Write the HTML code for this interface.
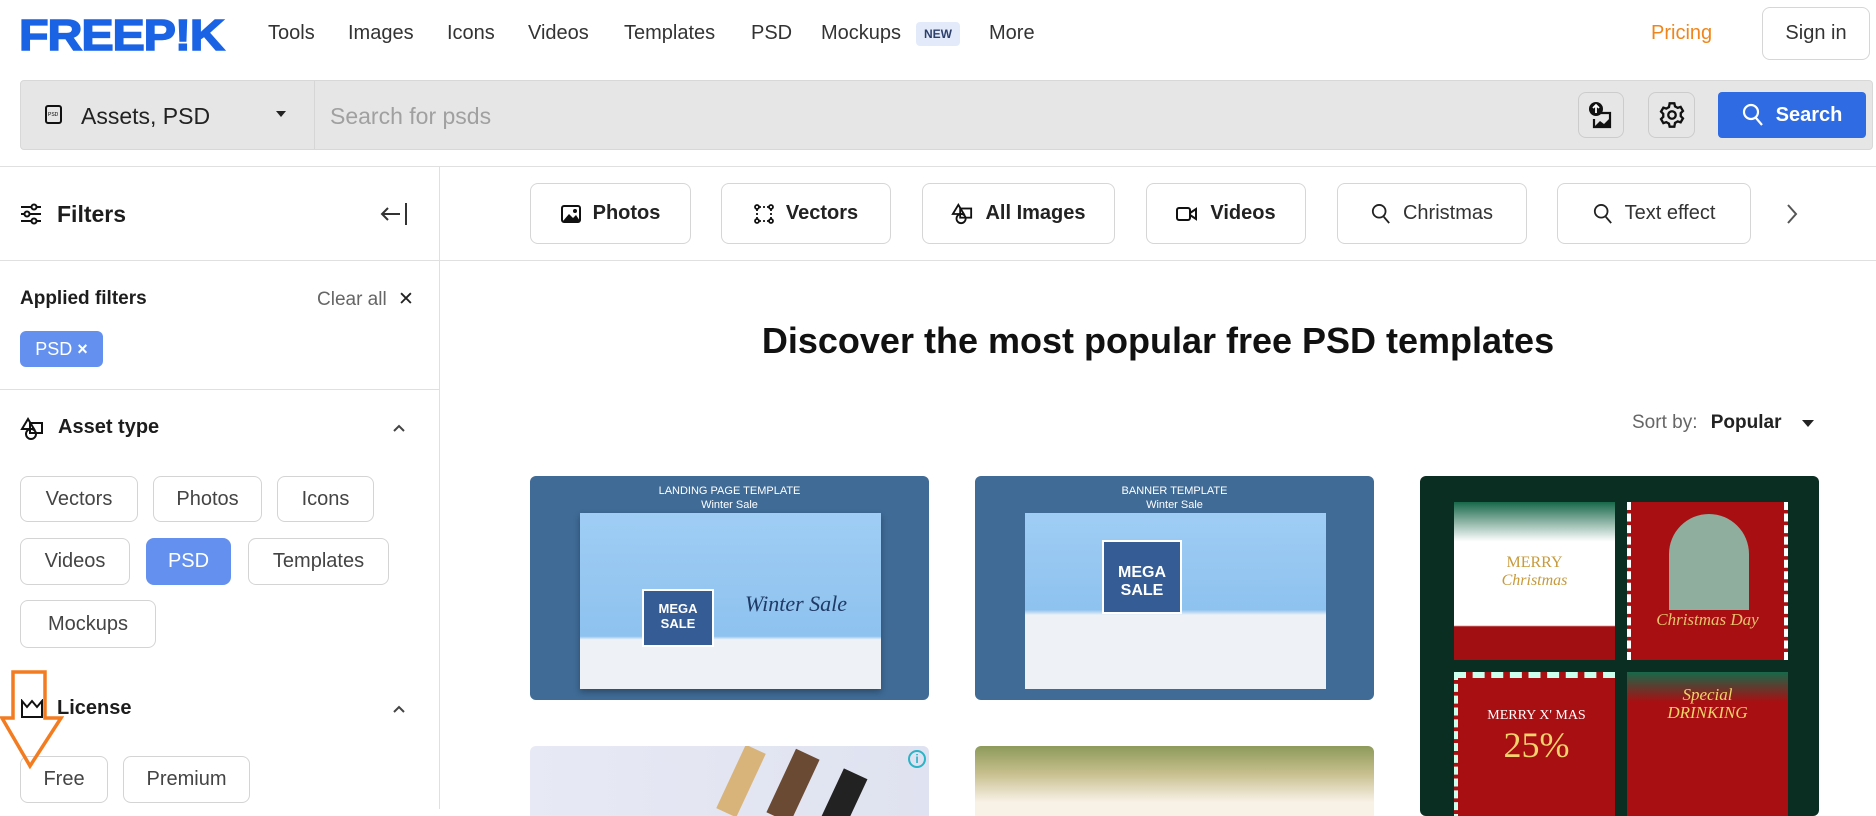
<!DOCTYPE html>
<html><head><meta charset="utf-8"><style>
*{box-sizing:border-box;margin:0;padding:0}
body{width:1876px;height:809px;overflow:hidden;background:#fff;font-family:"Liberation Sans",sans-serif;color:#1d1d1d;position:relative}
.a{position:absolute}
.nav{font-size:20px;color:#333;top:22px}
.btn{position:absolute;border:1px solid #d6d6d6;border-radius:8px;background:#fff;display:flex;align-items:center;justify-content:center;font-size:20px;color:#333}
.chip{position:absolute;top:183px;height:61px;border:1px solid #d6d6d6;border-radius:8px;display:flex;align-items:center;justify-content:center;gap:12px;font-size:20px;color:#222;font-weight:600}
.chip.q{font-weight:400;color:#333}
.fb{position:absolute;border:1px solid #d4d4d4;border-radius:8px;display:flex;align-items:center;justify-content:center;font-size:20px;color:#444}
</style></head><body>
<!-- header -->
<div class="a" style="left:19px;top:11px;font-size:44px;font-weight:900;color:#1a63e5;letter-spacing:-1px;transform:scaleX(1.1);transform-origin:left;-webkit-text-stroke:1.5px #1a63e5">FREEP!K</div>
<div class="a nav" style="left:268px">Tools</div>
<div class="a nav" style="left:348px">Images</div>
<div class="a nav" style="left:447px">Icons</div>
<div class="a nav" style="left:528px">Videos</div>
<div class="a nav" style="left:624px">Templates</div>
<div class="a nav" style="left:751px">PSD</div>
<div class="a nav" style="left:821px">Mockups</div>
<div class="a" style="left:916px;top:22px;width:44px;height:24px;background:#e3ebfb;border-radius:4px;font-size:12px;font-weight:700;color:#2d3f6b;text-align:center;line-height:24px">NEW</div>
<div class="a nav" style="left:989px">More</div>
<div class="a" style="left:1651px;top:22px;font-size:20px;color:#f0861b">Pricing</div>
<div class="btn" style="left:1762px;top:7px;width:108px;height:53px">Sign in</div>
<!-- search -->
<div class="a" style="left:20px;top:80px;width:1853px;height:70px;background:#e6e6e6;border:1px solid #d8d8d8;border-radius:4px"></div>
<div class="a" style="left:314px;top:81px;width:1px;height:68px;background:#d6d6d6"></div>
<svg class="a" style="left:44px;top:104px" width="20" height="22" viewBox="0 0 20 22"><rect x="2" y="2" width="15" height="17" rx="2" fill="none" stroke="#111" stroke-width="2"/><text x="4" y="12" font-size="5" font-family="Liberation Sans">PSD</text></svg>
<div class="a" style="left:81px;top:103px;font-size:23px;color:#222">Assets, PSD</div>
<div class="a" style="left:276px;top:111px;width:0;height:0;border-left:5px solid transparent;border-right:5px solid transparent;border-top:6px solid #222"></div>
<div class="a" style="left:330px;top:103px;font-size:23px;color:#a0a0a0">Search for psds</div>
<div class="btn" style="left:1578px;top:92px;width:46px;height:46px;background:#e6e6e6;border-color:#ccc"><svg width="26" height="28" viewBox="0 0 26 28"><circle cx="8" cy="8" r="7" fill="#111"/><path d="M8 12V4M5 7l3-3 3 3" stroke="#fff" stroke-width="1.8" fill="none"/><path d="M12 12h10v14H6v-8" fill="none" stroke="#111" stroke-width="2.2"/><path d="M7 25l5-5 4 3 6-6v9z" fill="#111"/></svg></div>
<div class="btn" style="left:1648px;top:92px;width:47px;height:46px;background:#e6e6e6;border-color:#ccc"><svg width="28" height="28" viewBox="0 0 24 24"><path d="M10 2h4l.6 2.6 2.3 1.3 2.5-.8 2 3.4-1.9 1.9v2.6l1.9 1.9-2 3.4-2.5-.8-2.3 1.3L14 22h-4l-.6-2.6-2.3-1.3-2.5.8-2-3.4 1.9-1.9v-2.6L2.6 9.1l2-3.4 2.5.8 2.3-1.3z" fill="none" stroke="#111" stroke-width="2"/><circle cx="12" cy="12" r="3.2" fill="none" stroke="#111" stroke-width="2"/></svg></div>
<div class="a" style="left:1718px;top:92px;width:148px;height:46px;background:#2f6be3;border-radius:4px;color:#fff;font-size:20px;font-weight:600;display:flex;align-items:center;justify-content:center;gap:12px"><svg width="22" height="24" viewBox="0 0 22 24"><circle cx="9" cy="9" r="7" fill="none" stroke="#fff" stroke-width="2.2"/><path d="M14 15l6 7" stroke="#fff" stroke-width="2.2"/></svg>Search</div>
<!-- lines -->
<div class="a" style="left:0;top:166px;width:1876px;height:1px;background:#e0e0e0"></div>
<div class="a" style="left:0;top:260px;width:1876px;height:1px;background:#e0e0e0"></div>
<div class="a" style="left:439px;top:167px;width:1px;height:642px;background:#e0e0e0"></div>
<!-- sidebar -->
<svg class="a" style="left:20px;top:203px" width="22" height="22" viewBox="0 0 22 22" stroke="#111" stroke-width="2" fill="none"><path d="M1 4h20M1 11h20M1 18h20"/><circle cx="14" cy="4" r="2.5" fill="#fff"/><circle cx="7" cy="11" r="2.5" fill="#fff"/><circle cx="14" cy="18" r="2.5" fill="#fff"/></svg>
<div class="a" style="left:57px;top:201px;font-size:23px;font-weight:600">Filters</div>
<svg class="a" style="left:380px;top:202px" width="28" height="24" viewBox="0 0 28 24" stroke="#333" stroke-width="2" fill="none"><path d="M2 12h18M8 6l-6 6 6 6M26 1v22"/></svg>
<div class="a" style="left:20px;top:288px;font-size:19px;font-weight:700">Applied filters</div>
<div class="a" style="left:317px;top:288px;font-size:19px;color:#666">Clear all <span style="color:#222;margin-left:6px">✕</span></div>
<div class="a" style="left:20px;top:331px;width:83px;height:36px;background:#6490ef;border-radius:6px;color:#fff;font-size:18px;text-align:center;line-height:36px">PSD <b>×</b></div>
<div class="a" style="left:0;top:389px;width:439px;height:1px;background:#e0e0e0"></div>
<svg class="a" style="left:20px;top:417px" width="24" height="24" viewBox="0 0 24 24" stroke="#111" stroke-width="2" fill="none"><path d="M8 2L2 12h12z"/><rect x="10" y="6" width="12" height="10"/><circle cx="11" cy="17" r="5"/></svg>
<div class="a" style="left:58px;top:416px;font-size:20px;font-weight:700">Asset type</div>
<svg class="a" style="left:392px;top:423px" width="14" height="10" viewBox="0 0 14 10"><path d="M2 8l5-5 5 5" stroke="#444" stroke-width="2" fill="none"/></svg>
<div class="fb" style="left:20px;top:476px;width:118px;height:46px">Vectors</div>
<div class="fb" style="left:153px;top:476px;width:109px;height:46px">Photos</div>
<div class="fb" style="left:277px;top:476px;width:97px;height:46px">Icons</div>
<div class="fb" style="left:20px;top:538px;width:110px;height:47px">Videos</div>
<div class="fb" style="left:146px;top:538px;width:85px;height:47px;background:#6490ef;border-color:#6490ef;color:#fff">PSD</div>
<div class="fb" style="left:248px;top:538px;width:141px;height:47px">Templates</div>
<div class="fb" style="left:20px;top:600px;width:136px;height:48px">Mockups</div>
<svg class="a" style="left:20px;top:699px" width="24" height="20" viewBox="0 0 24 20" stroke="#111" stroke-width="2" fill="none"><path d="M2 2v16h20V2l-5 6-5-6-5 6z"/></svg>
<div class="a" style="left:57px;top:697px;font-size:20px;font-weight:700">License</div>
<svg class="a" style="left:392px;top:704px" width="14" height="10" viewBox="0 0 14 10"><path d="M2 8l5-5 5 5" stroke="#444" stroke-width="2" fill="none"/></svg>
<div class="fb" style="left:20px;top:756px;width:88px;height:47px">Free</div>
<div class="fb" style="left:123px;top:756px;width:127px;height:47px">Premium</div>
<svg class="a" style="left:0;top:670px" width="64" height="100" viewBox="0 0 64 100"><path d="M13 2h32v46h16L30 96 2 48h11z" fill="none" stroke="#f47c20" stroke-width="3.5"/></svg>
<!-- chips -->
<div class="chip" style="left:530px;width:161px"><svg width="20" height="18" viewBox="0 0 20 18"><rect x="1" y="1" width="18" height="16" rx="2" fill="none" stroke="#111" stroke-width="2"/><path d="M2 16l6-7 4 4 3-3 4 6z" fill="#111"/><circle cx="14" cy="6" r="2" fill="#111"/></svg>Photos</div>
<div class="chip" style="left:721px;width:170px"><svg width="20" height="20" viewBox="0 0 20 20" fill="none" stroke="#111" stroke-width="1.8"><circle cx="3" cy="3" r="2"/><circle cx="17" cy="3" r="2"/><circle cx="3" cy="17" r="2"/><circle cx="17" cy="17" r="2"/><path d="M3 5v10M17 5v10M5 3h10M5 17h10" stroke-dasharray="2 2"/></svg>Vectors</div>
<div class="chip" style="left:922px;width:193px"><svg width="22" height="22" viewBox="0 0 24 24" stroke="#111" stroke-width="2" fill="none"><path d="M8 2L2 12h12z"/><rect x="10" y="6" width="12" height="10"/><circle cx="11" cy="17" r="5"/></svg>All Images</div>
<div class="chip" style="left:1146px;width:160px"><svg width="22" height="16" viewBox="0 0 22 16" fill="none" stroke="#111" stroke-width="2"><rect x="1" y="2" width="13" height="12" rx="2"/><path d="M14 7l6-4v10l-6-4"/></svg>Videos</div>
<div class="chip q" style="left:1337px;width:190px"><svg width="20" height="22" viewBox="0 0 22 24"><circle cx="9" cy="9" r="7" fill="none" stroke="#222" stroke-width="2"/><path d="M14 15l6 7" stroke="#222" stroke-width="2"/></svg>Christmas</div>
<div class="chip q" style="left:1557px;width:194px"><svg width="20" height="22" viewBox="0 0 22 24"><circle cx="9" cy="9" r="7" fill="none" stroke="#222" stroke-width="2"/><path d="M14 15l6 7" stroke="#222" stroke-width="2"/></svg>Text effect</div>
<svg class="a" style="left:1785px;top:202px" width="14" height="24" viewBox="0 0 14 24"><path d="M3 3l8 9-8 9" stroke="#555" stroke-width="2" fill="none"/></svg>
<!-- heading -->
<div class="a" style="left:440px;width:1436px;top:320px;text-align:center;font-size:36px;font-weight:700;color:#111">Discover the most popular free PSD templates</div>
<div class="a" style="left:1632px;top:412px;font-size:19px;color:#666">Sort by: <b style="color:#222;margin-left:8px;font-weight:600">Popular</b></div>
<div class="a" style="left:1802px;top:420px;border-left:6px solid transparent;border-right:6px solid transparent;border-top:7px solid #222"></div>
<!-- card 1 -->
<div class="a" style="left:530px;top:476px;width:399px;height:224px;background:#3f6b96;border-radius:6px;overflow:hidden">
<div class="a" style="left:0;width:399px;top:8px;text-align:center;color:#fff;font-size:11px;line-height:14px">LANDING PAGE TEMPLATE<br>Winter Sale</div>
<div class="a" style="left:50px;top:37px;width:301px;height:176px;background:linear-gradient(#9fcdf4 0%,#8ec2ef 70%,#eef2f6 72%);box-shadow:0 3px 6px rgba(0,0,0,.3)">
<div class="a" style="left:62px;top:76px;width:72px;height:58px;background:#355c94;border:2px solid #fff;color:#fff;font-size:13px;font-weight:700;text-align:center;line-height:15px;padding-top:10px">MEGA<br>SALE</div>
<div class="a" style="left:165px;top:78px;font-size:22px;font-style:italic;color:#1f3a66;font-family:'Liberation Serif',serif">Winter Sale</div></div></div>
<!-- card 2 -->
<div class="a" style="left:975px;top:476px;width:399px;height:224px;background:#3f6b96;border-radius:6px;overflow:hidden">
<div class="a" style="left:0;width:399px;top:8px;text-align:center;color:#fff;font-size:11px;line-height:14px">BANNER TEMPLATE<br>Winter Sale</div>
<div class="a" style="left:50px;top:37px;width:301px;height:176px;background:linear-gradient(#9fcdf4 0%,#8ec2ef 55%,#eef2f6 58%)">
<div class="a" style="left:77px;top:27px;width:80px;height:74px;background:#355c94;border:2px solid #fff;color:#fff;font-size:16px;font-weight:700;text-align:center;line-height:18px;padding-top:22px">MEGA<br>SALE</div></div></div>
<!-- card 3 -->
<div class="a" style="left:1420px;top:476px;width:399px;height:340px;background:#0b2e22;border-radius:6px;overflow:hidden">
<div class="a" style="left:34px;top:26px;width:161px;height:158px;background:linear-gradient(#17684a 0%,#fff 25%,#fff 78%,#a10f12 79%)"><div style="text-align:center;margin-top:52px;color:#c79a3b;font-size:16px;font-family:'Liberation Serif',serif;line-height:18px">MERRY<br><i>Christmas</i></div></div>
<div class="a" style="left:207px;top:26px;width:161px;height:158px;background:#a80f12;border-left:4px dashed #fff;border-right:4px dashed #fff"><div style="width:80px;height:96px;margin:12px 0 0 38px;border-radius:40px 40px 0 0;background:#8fae9e"></div><div style="text-align:center;color:#e6c36d;font-size:17px;font-style:italic;font-family:'Liberation Serif',serif">Christmas Day</div></div>
<div class="a" style="left:34px;top:196px;width:161px;height:150px;background:#a80f12;border-left:4px dashed #cfe;border-top:6px dashed #cfe"><div style="text-align:center;margin-top:30px;color:#fff;font-size:14px;font-family:'Liberation Serif',serif">MERRY X' MAS</div><div style="text-align:center;color:#f3d36b;font-size:36px;font-family:'Liberation Serif',serif">25%</div></div>
<div class="a" style="left:207px;top:196px;width:161px;height:150px;background:linear-gradient(#17684a 0%,#a80f12 20%)"><div style="text-align:center;margin-top:14px;color:#f3d36b;font-size:17px;font-style:italic;font-family:'Liberation Serif',serif;line-height:18px">Special<br>DRINKING</div></div></div>
<!-- row 2 -->
<div class="a" style="left:530px;top:746px;width:399px;height:70px;background:linear-gradient(90deg,#e7e9f4,#dfe2f0);border-radius:6px 6px 0 0;overflow:hidden">
<div class="a" style="left:200px;top:0;width:22px;height:70px;background:#d8b47a;transform:rotate(25deg)"></div>
<div class="a" style="left:250px;top:5px;width:26px;height:70px;background:#6b4a33;transform:rotate(25deg)"></div>
<div class="a" style="left:300px;top:25px;width:26px;height:60px;background:#222;transform:rotate(25deg)"></div>
<div class="a" style="left:378px;top:4px;width:18px;height:18px;border:2px solid #2bb3c6;border-radius:50%;color:#2bb3c6;font-size:12px;text-align:center;line-height:14px;font-weight:700">i</div></div>
<div class="a" style="left:975px;top:746px;width:399px;height:70px;background:linear-gradient(#8d9a5a 0%,#c8c08f 40%,#f8f1e6 80%);border-radius:6px 6px 0 0"></div>
</body></html>
